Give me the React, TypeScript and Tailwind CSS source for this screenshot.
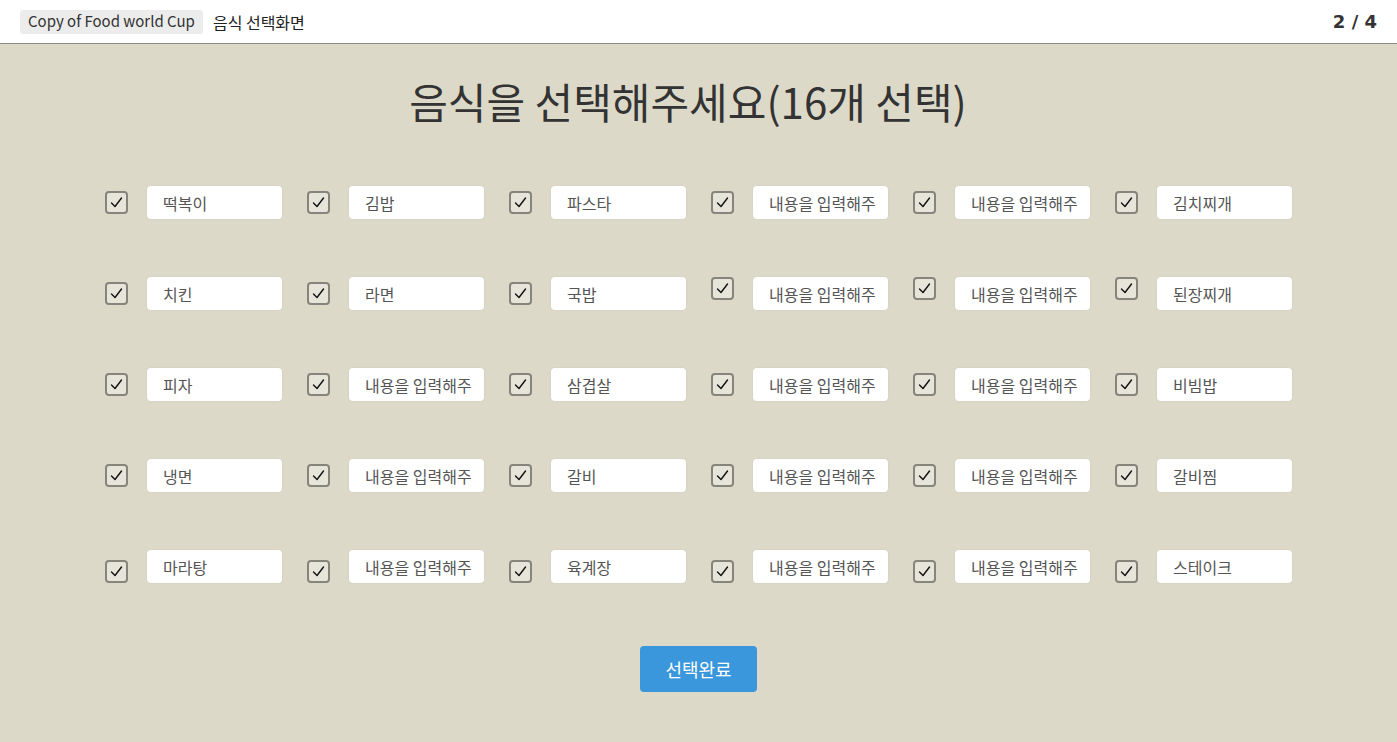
import React from 'react';

const rows: string[][] = [
  ['떡복이', '김밥', '파스타', '', '', '김치찌개'],
  ['치킨', '라면', '국밥', '', '', '된장찌개'],
  ['피자', '', '삼겹살', '', '', '비빔밥'],
  ['냉면', '', '갈비', '', '', '갈비찜'],
  ['마라탕', '', '육계장', '', '', '스테이크'],
];

// checkbox vertical nudge per row/col, as in the reference
const nudge = (r: number, c: number) => {
  if (r === 1 && c >= 3) return '-mt-[10px]';
  if (r === 4) return 'mt-[10px]';
  return '';
};

const CheckBox: React.FC<{ className?: string }> = ({ className }) => (
  <div
    className={`w-[23px] h-[23px] shrink-0 rounded-[4px] border-2 border-[#86847b] bg-[#e7e4da] flex items-center justify-center ${className ?? ''}`}
  >
    <svg width="15" height="15" viewBox="0 0 15 15" fill="none">
      <path d="M2.5 8 L6 11.5 L12.5 3" stroke="#111" strokeWidth="1.4" strokeLinecap="round" strokeLinejoin="round" />
    </svg>
  </div>
);

export default function App() {
  return (
    <div className="min-h-[742px] bg-[#ddd9c9] font-['Noto_Sans_CJK_KR','Noto_Sans',sans-serif] text-[#333]">
      <header className="h-[44px] bg-white border-b border-[#8c8a84] flex items-center justify-between pl-[20px] pr-[20px]">
        <div className="flex items-center gap-[10px]">
          <span className="bg-[#ececec] rounded-[3px] px-[8px] h-[24px] flex items-center text-[15px] text-[#333]">
            Copy of Food world Cup
          </span>
          <span className="text-[16px] text-[#222]">음식 선택화면</span>
        </div>
        <span className="text-[18px] font-bold text-[#333] font-['DejaVu_Sans',sans-serif]">2 / 4</span>
      </header>

      <h1 className="text-center text-[42px] leading-none text-[#333] pt-[36px] pr-[21px]">
        음식을 선택해주세요(16개 선택)
      </h1>

      <div className="flex flex-col items-center gap-[58px] mt-[64px]">
        {rows.map((row, r) => (
          <div key={r} className="flex gap-[25px]">
            {row.map((v, c) => (
              <div key={c} className="flex items-center gap-[19px]">
                <CheckBox className={nudge(r, c)} />
                <div className="w-[135px] h-[33px] bg-white rounded-[4px] shadow-[0_0_2px_rgba(0,0,0,0.08)] flex items-center px-[16px] text-[16px] text-[#555] whitespace-nowrap">
                  {v || '내용을 입력해주'}
                </div>
              </div>
            ))}
          </div>
        ))}
      </div>

      <div className="flex justify-center mt-[63px]">
        <button className="w-[117px] h-[46px] bg-[#3a97dc] rounded-[4px] text-white text-[18px]">
          선택완료
        </button>
      </div>
    </div>
  );
}
